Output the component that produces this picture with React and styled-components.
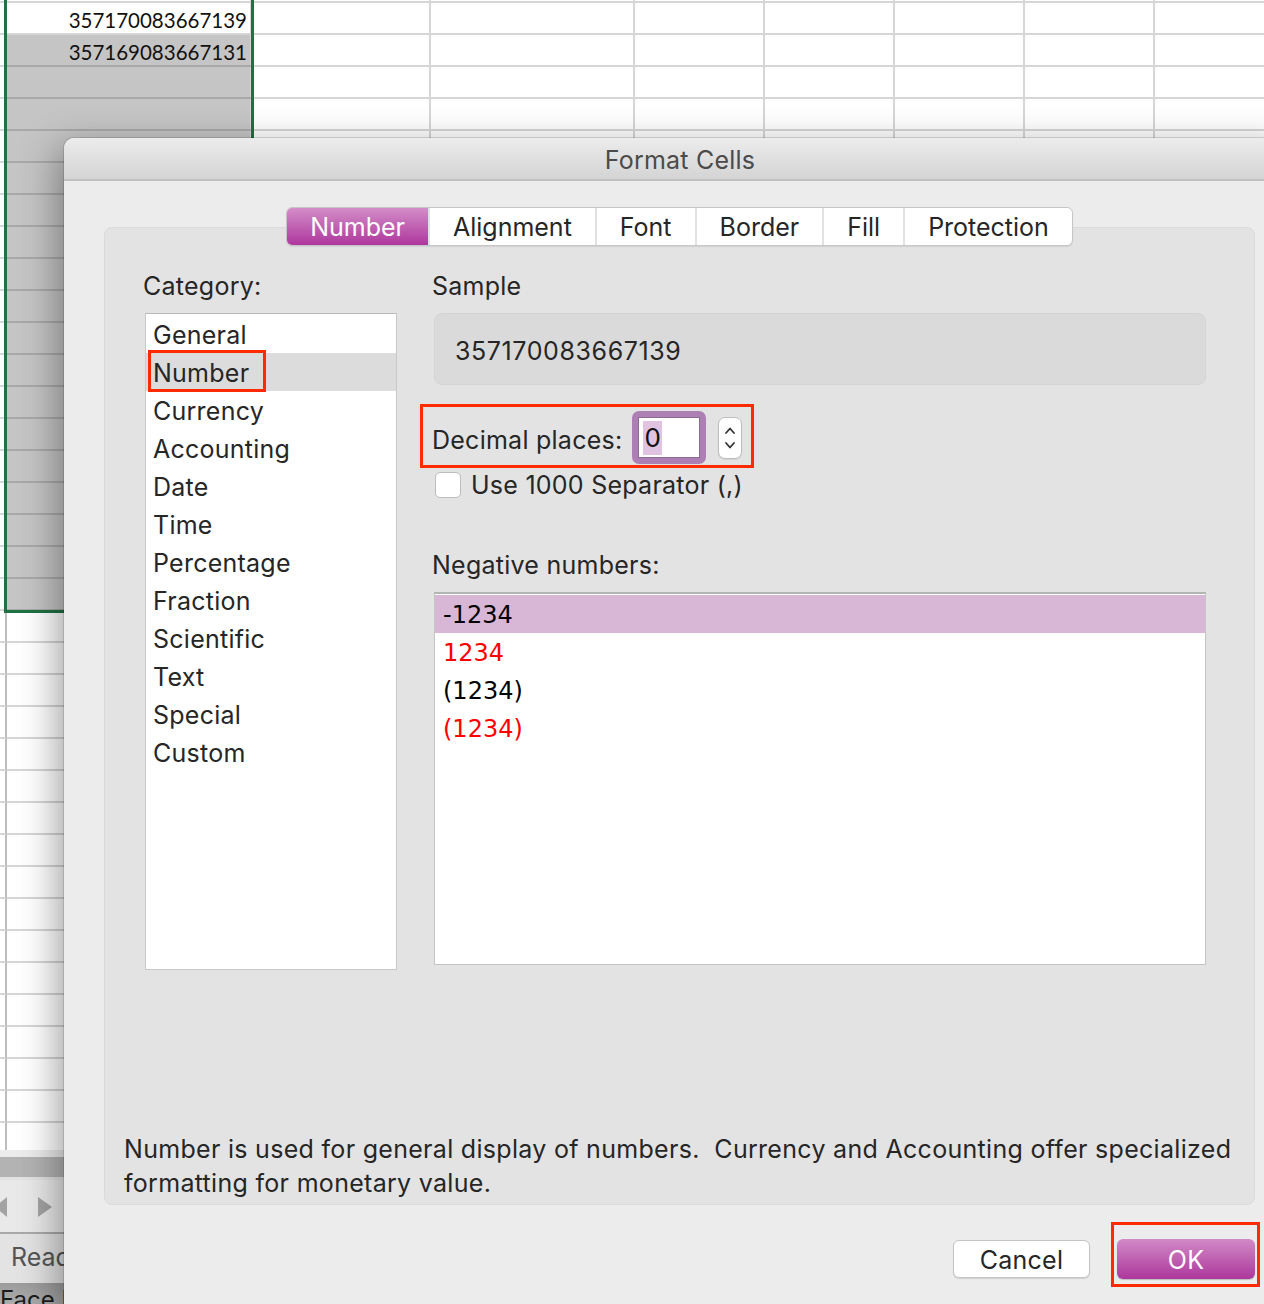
import React from "react";
import styled, { createGlobalStyle, css } from "styled-components";

const GlobalStyle = createGlobalStyle`
  html, body { margin: 0; padding: 0; background: #fff; }
  body {
    font-family: Inter, "Liberation Sans", sans-serif;
    -webkit-font-smoothing: antialiased;
  }
`;

const Screen = styled.div`
  position: relative;
  width: 1264px;
  height: 1304px;
  overflow: hidden;
  background: #fff;
`;

/* ---------- spreadsheet behind the dialog ---------- */

const Workbook = styled.div`
  display: flex;
  flex-direction: column;
  height: 100%;
`;

const Sheet = styled.div`
  margin-top: -29px;
  height: 1179px;
  flex-shrink: 0;
  overflow: hidden;
`;

const Row = styled.div`
  display: flex;
  height: 32px;
`;

const Cell = styled.div`
  box-sizing: border-box;
  flex-shrink: 0;
  width: ${(p) => p.$w}px;
  height: 32px;
  padding-right: 3px;
  border-bottom: 2px solid ${(p) => (p.$shaded ? "#a9a9a9" : "#d6d6d6")};
  border-right: 2px solid ${(p) => (p.$first ? "#bdbdbd" : "#d6d6d6")};
  background: ${(p) => (p.$shaded ? "#c5c5c5" : "#fff")};
  font-family: Lato, "Liberation Sans", sans-serif;
  font-size: 20.5px;
  line-height: 34px;
  text-align: right;
  color: #111;
`;

const Selection = styled.div`
  position: absolute;
  left: 4px;
  top: -10px;
  width: 250px;
  height: 623px;
  box-sizing: border-box;
  border: 3px solid #1f7244;
  pointer-events: none;
`;

const HScroll = styled.div`
  height: 30px;
  flex-shrink: 0;
  background: linear-gradient(#ececec 0 7px, #b3b3b3 7px 27px, #e2e2e2 27px);
`;

const SheetNav = styled.div`
  height: 52px;
  flex-shrink: 0;
  background: #e9e9e9;
  border-bottom: 2px solid #a9a9a9;
`;

const StatusBar = styled.div`
  height: 49px;
  flex-shrink: 0;
  box-sizing: border-box;
  padding-left: 11px;
  background: #e3e3e3;
  font-size: 25px;
  line-height: 47px;
  color: #555;
`;

const Dock = styled.div`
  flex: 1;
  padding-top: 4px;
  background: linear-gradient(#9c9c9c, #b2b2b2);
  font-size: 24px;
  line-height: 26px;
  color: #1c1c1c;
  white-space: nowrap;
`;

/* ---------- dialog ---------- */

const Dialog = styled.div`
  position: absolute;
  left: 64px;
  top: 138px;
  width: 1232px;
  height: 1200px;
  display: flex;
  flex-direction: column;
  background: #ececec;
  border-radius: 10px 10px 0 0;
  box-shadow: 0 0 0 1px rgba(0, 0, 0, 0.12), -6px 10px 38px rgba(0, 0, 0, 0.38);
`;

const TitleBar = styled.div`
  height: 43px;
  box-sizing: border-box;
  padding-top: 3px;
  display: flex;
  align-items: center;
  justify-content: center;
  border-radius: 10px 10px 0 0;
  border-bottom: 2px solid #c0c0c0;
  background: linear-gradient(#ececec, #d4d4d4);
  font-size: 25px;
  letter-spacing: 0.2px;
  color: #4b4b4b;
`;

const Body = styled.div`
  display: flex;
  flex-direction: column;
  padding: 26px 41px 0 40px;
  letter-spacing: 0.25px;
`;

const TabBar = styled.div`
  position: relative;
  z-index: 1;
  align-self: center;
  display: flex;
  height: 39px;
  box-sizing: border-box;
  border: 1px solid #c6c6c6;
  border-radius: 6px;
  background: #fff;
  box-shadow: 0 1px 1px rgba(0, 0, 0, 0.08);
  overflow: hidden;
`;

const Tab = styled.div`
  display: flex;
  align-items: center;
  padding: 1px 23px 0;
  font-size: 25px;
  letter-spacing: 0;
  color: #262626;
  & + & {
    border-left: 2px solid #e1e1e1;
  }
  ${(p) =>
    p.$active &&
    css`
      background: linear-gradient(#d38dc8, #ae379d);
      color: #fff;
    `}
`;

const Panel = styled.div`
  margin-top: -19px;
  height: 978px;
  box-sizing: border-box;
  display: flex;
  flex-direction: column;
  padding: 43px 10px 4px 19px;
  background: #e3e3e3;
  border: 1px solid #dadada;
  border-radius: 8px;
`;

const Columns = styled.div`
  display: grid;
  grid-template-columns: 254px 774px;
  column-gap: 35px;
  padding-left: 19px;
`;

const Column = styled.div`
  display: flex;
  flex-direction: column;
  align-items: flex-start;
`;

const Label = styled.div`
  font-size: 25px;
  line-height: 30px;
  color: #262626;
  margin: ${(p) => p.$top || 0}px 0 12px;
`;

const CategoryList = styled.div`
  margin-left: 2px;
  width: 252px;
  height: 657px;
  box-sizing: border-box;
  padding-top: 1px;
  background: #fff;
  border: 1px solid #c9c9c9;
  border-top-color: #b9b9b9;
`;

const CategoryItem = styled.div`
  height: 38px;
  padding-left: 7px;
  font-size: 25px;
  line-height: 40px;
  color: #262626;
  background: ${(p) => (p.$selected ? "#dcdcdc" : "transparent")};
`;

const Mark = styled.span`
  display: inline-block;
  vertical-align: top;
  height: 42px;
  box-sizing: border-box;
  margin: -3px 0 -1px -5px;
  padding: 0 14px 0 2px;
  border: 3px solid #ff2a00;
  line-height: 40px;
`;

const SampleBox = styled.div`
  margin-left: 2px;
  width: 772px;
  height: 72px;
  box-sizing: border-box;
  display: flex;
  align-items: center;
  padding: 3px 0 0 20px;
  background: #dadada;
  border: 1px solid #d4d4d4;
  border-radius: 8px;
  font-size: 25px;
  letter-spacing: 0.6px;
  color: #262626;
`;

const DecimalBox = styled.div`
  display: flex;
  align-items: center;
  margin: 19px 0 0 -12px;
  padding: 4px 9px 1px 9px;
  border: 3px solid #ff2a00;
  font-size: 25px;
  color: #262626;
`;

const DecimalLabel = styled.span`
  padding-top: 5px;
`;

const SpinRing = styled.div`
  display: flex;
  margin-left: 10px;
  width: 74px;
  height: 53px;
  box-sizing: border-box;
  padding: 6px;
  border-radius: 7px;
  background: #ad80b4;
`;

const SpinInput = styled.div`
  flex: 1;
  display: flex;
  align-items: center;
  padding-left: 4px;
  background: #fff;
  border: 1px solid #8d6a93;
`;

const Selected = styled.span`
  padding: 0 1px;
  font-size: 26px;
  line-height: 34px;
  background: #e0c3e0;
  color: #111;
`;

const Stepper = styled.div`
  margin-left: 12px;
  width: 24px;
  height: 42px;
  box-sizing: border-box;
  display: flex;
  align-items: center;
  justify-content: center;
  background: #fff;
  border: 1px solid #bdbdbd;
  border-radius: 7px;
  box-shadow: 0 1px 1px rgba(0, 0, 0, 0.08);
`;

const CheckRow = styled.div`
  display: flex;
  align-items: center;
  gap: 10px;
  height: 26px;
  margin: 4px 0 0 3px;
  font-size: 25px;
  color: #262626;
`;

const Checkbox = styled.div`
  width: 26px;
  height: 26px;
  box-sizing: border-box;
  background: #fff;
  border: 1px solid #bcbcbc;
  border-radius: 5px;
`;

const NegList = styled.div`
  margin-left: 2px;
  width: 772px;
  height: 373px;
  box-sizing: border-box;
  padding-top: 1px;
  background: #fff;
  border: 1px solid #c4c4c4;
  border-top: 2px solid #b4b4b4;
`;

const NegItem = styled.div`
  height: 38px;
  padding-left: 8px;
  font-family: "DejaVu Sans", Verdana, sans-serif;
  font-size: 24px;
  letter-spacing: 0;
  line-height: 40px;
  color: ${(p) => (p.$red ? "#ff0000" : "#000")};
  background: ${(p) => (p.$selected ? "#d8b6d6" : "transparent")};
`;

const Description = styled.div`
  margin-top: auto;
  font-size: 25px;
  letter-spacing: 0.3px;
  line-height: 34px;
  color: #262626;
`;

const Footer = styled.div`
  display: flex;
  justify-content: flex-end;
  align-items: flex-end;
  gap: 21px;
  margin: 17px -5px 0 0;
`;

const Button = styled.div`
  box-sizing: border-box;
  display: flex;
  align-items: center;
  justify-content: center;
  padding-top: 2px;
  font-size: 25px;
  border-radius: 6px;
  ${(p) =>
    p.$primary
      ? css`
          width: 138px;
          height: 40px;
          color: #fff;
          background: linear-gradient(#d18ac6, #ad379c);
          box-shadow: 0 1px 1px rgba(0, 0, 0, 0.2);
        `
      : css`
          width: 137px;
          height: 38px;
          margin-bottom: 9px;
          color: #262626;
          background: #fff;
          border: 1px solid #c4c4c4;
          box-shadow: 0 1px 1px rgba(0, 0, 0, 0.12);
        `}
`;

const OkMark = styled.div`
  padding: 14px 2px 5px 3px;
  border: 3px solid #ff2a00;
`;

const columns = [7, 245, 179, 204, 130, 130, 130, 130, 140];
const values = { 1: "357170083667139", 2: "357169083667131" };
const categories = [
  "General", "Number", "Currency", "Accounting", "Date", "Time",
  "Percentage", "Fraction", "Scientific", "Text", "Special", "Custom",
];
const negatives = [
  { text: "-1234", red: false },
  { text: "1234", red: true },
  { text: "(1234)", red: false },
  { text: "(1234)", red: true },
];
const tabs = ["Number", "Alignment", "Font", "Border", "Fill", "Protection"];

const Chevrons = () => (
  <svg width="14" height="30" viewBox="0 0 14 30" fill="none" stroke="#333" strokeWidth="1.8" strokeLinecap="round" strokeLinejoin="round">
    <polyline points="3,10 7,5.5 11,10" />
    <polyline points="3,20 7,24.5 11,20" />
  </svg>
);

const NavArrows = () => (
  <svg width="64" height="52" viewBox="0 0 64 52">
    <polygon points="7,17 7,37 -5,27" fill="#a3a3a3" />
    <polygon points="38,17 38,37 52,27" fill="#a3a3a3" />
  </svg>
);

export default function App() {
  return (
    <Screen>
      <GlobalStyle />
      <Workbook>
        <Sheet>
          {Array.from({ length: 38 }, (_, r) => (
            <Row key={r}>
              {columns.map((w, c) => (
                <Cell key={c} $w={w} $first={c === 0} $shaded={c === 1 && r >= 2 && r <= 19}>
                  {c === 1 ? values[r] : null}
                </Cell>
              ))}
            </Row>
          ))}
        </Sheet>
        <HScroll />
        <SheetNav>
          <NavArrows />
        </SheetNav>
        <StatusBar>Ready</StatusBar>
        <Dock>Face B</Dock>
      </Workbook>
      <Selection />

      <Dialog>
        <TitleBar>Format Cells</TitleBar>
        <Body>
          <TabBar>
            {tabs.map((t, i) => (
              <Tab key={t} $active={i === 0}>{t}</Tab>
            ))}
          </TabBar>
          <Panel>
            <Columns>
              <Column>
                <Label>Category:</Label>
                <CategoryList>
                  {categories.map((c) => (
                    <CategoryItem key={c} $selected={c === "Number"}>
                      {c === "Number" ? <Mark>{c}</Mark> : c}
                    </CategoryItem>
                  ))}
                </CategoryList>
              </Column>
              <Column>
                <Label>Sample</Label>
                <SampleBox>357170083667139</SampleBox>
                <DecimalBox>
                  <DecimalLabel>Decimal places:</DecimalLabel>
                  <SpinRing>
                    <SpinInput>
                      <Selected>0</Selected>
                    </SpinInput>
                  </SpinRing>
                  <Stepper>
                    <Chevrons />
                  </Stepper>
                </DecimalBox>
                <CheckRow>
                  <Checkbox />
                  Use 1000 Separator (,)
                </CheckRow>
                <Label $top={52}>Negative numbers:</Label>
                <NegList>
                  {negatives.map((n, i) => (
                    <NegItem key={i} $red={n.red} $selected={i === 0}>{n.text}</NegItem>
                  ))}
                </NegList>
              </Column>
            </Columns>
            <Description>
              Number is used for general display of numbers.&nbsp; Currency and Accounting offer specialized formatting for monetary value.
            </Description>
          </Panel>
          <Footer>
            <Button>Cancel</Button>
            <OkMark>
              <Button $primary>OK</Button>
            </OkMark>
          </Footer>
        </Body>
      </Dialog>
    </Screen>
  );
}
